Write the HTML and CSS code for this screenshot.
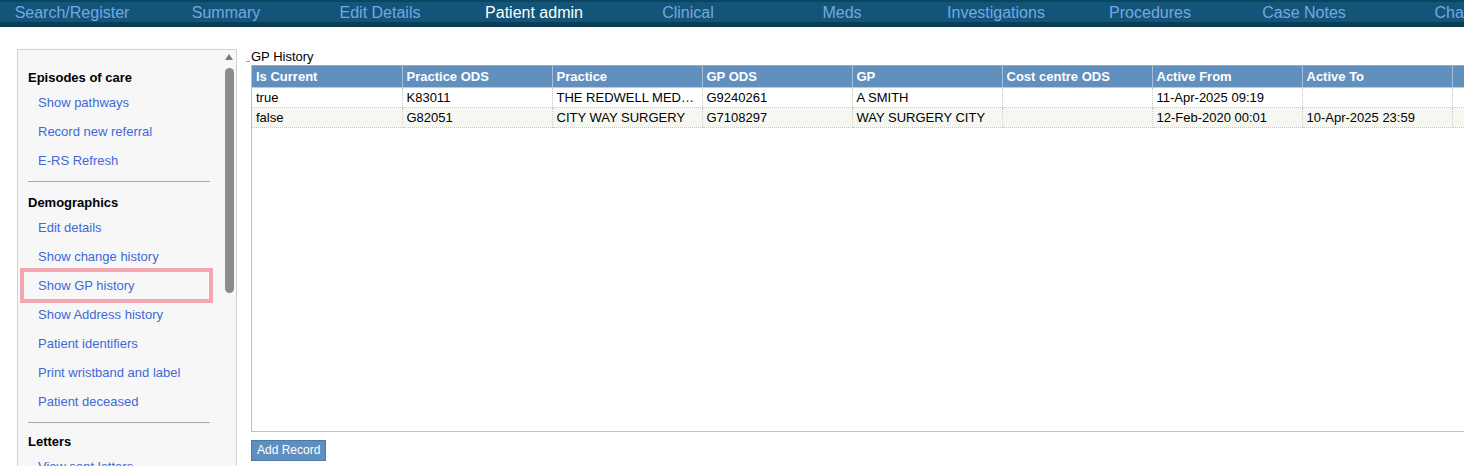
FILE: index.html
```html
<!DOCTYPE html>
<html lang="en">
<head>
    <meta charset="UTF-8">
    <meta name="viewport" content="width=device-width, initial-scale=1.0">
    <title>Patient admin - GP History</title>
    <link rel="stylesheet" href="styles.css">
</head>
<body>

    <div class="topnav">
        <div class="nav-inner">
            <a class="nav-item">Search/Register</a>
            <a class="nav-item">Summary</a>
            <a class="nav-item">Edit Details</a>
            <a class="nav-item active">Patient admin</a>
            <a class="nav-item">Clinical</a>
            <a class="nav-item">Meds</a>
            <a class="nav-item">Investigations</a>
            <a class="nav-item">Procedures</a>
            <a class="nav-item">Case Notes</a>
            <a class="nav-item">Charts</a>
        </div>
    </div>

    <div class="page">
        <aside class="sidebar">
            <div class="side-menu">
                <div class="side-heading">Episodes of care</div>
                <a class="side-link">Show pathways</a>
                <a class="side-link">Record new referral</a>
                <a class="side-link">E-RS Refresh</a>
                <div class="side-sep"></div>

                <div class="side-heading">Demographics</div>
                <a class="side-link">Edit details</a>
                <a class="side-link">Show change history</a>
                <a class="side-link highlight">Show GP history</a>
                <a class="side-link">Show Address history</a>
                <a class="side-link">Patient identifiers</a>
                <a class="side-link">Print wristband and label</a>
                <a class="side-link">Patient deceased</a>
                <div class="side-sep short"></div>

                <div class="side-heading">Letters</div>
                <a class="side-link">View sent letters</a>
                <a class="side-link">Create letter</a>
            </div>
            <div class="side-scroll">
                <span class="scroll-arrow"></span>
                <span class="scroll-thumb"></span>
            </div>
        </aside>

        <main class="content">
            <div class="panel-title">GP History</div>
            <div class="grid-box">
                <table class="grid">
                    <colgroup>
                        <col class="c150"><col class="c150"><col class="c150"><col class="c150">
                        <col class="c150"><col class="c150"><col class="c150"><col class="c150">
                        <col>
                    </colgroup>
                    <thead>
                        <tr>
                            <th>Is Current</th>
                            <th>Practice ODS</th>
                            <th>Practice</th>
                            <th>GP ODS</th>
                            <th>GP</th>
                            <th>Cost centre ODS</th>
                            <th>Active From</th>
                            <th>Active To</th>
                            <th class="filler"></th>
                        </tr>
                    </thead>
                    <tbody>
                        <tr>
                            <td>true</td>
                            <td>K83011</td>
                            <td>THE REDWELL MEDICAL CENTRE</td>
                            <td>G9240261</td>
                            <td>A SMITH</td>
                            <td></td>
                            <td>11-Apr-2025 09:19</td>
                            <td></td>
                            <td class="filler"></td>
                        </tr>
                        <tr class="alt">
                            <td>false</td>
                            <td>G82051</td>
                            <td>CITY WAY SURGERY</td>
                            <td>G7108297</td>
                            <td>WAY SURGERY CITY</td>
                            <td></td>
                            <td>12-Feb-2020 00:01</td>
                            <td>10-Apr-2025 23:59</td>
                            <td class="filler"></td>
                        </tr>
                    </tbody>
                </table>
            </div>
            <button class="add-button">Add Record</button>
        </main>
    </div>

</body>
</html>
```

FILE: styles.css
```css
body {
    margin: 0;
    height: 466px;
    overflow: hidden;
    background-color: #ffffff;
    font-family: "Liberation Sans", Arial, sans-serif;
    color: #000000;
}
.topnav {
    height: 20px;
    background-color: #135579;
    border-top: 2px solid #0c4560;
    border-bottom: 5px solid #0b3e55;
    overflow: hidden;
}
.nav-inner {
    display: flex;
    margin-left: -5px;
    padding-top: 1px;
    white-space: nowrap;
}
.nav-item {
    flex: 0 0 154px;
    text-align: center;
    font-size: 16px;
    line-height: 19px;
    color: #74a8e2;
    text-decoration: none;
}
.nav-item.active {
    color: #ffffff;
}
.page {
    display: flex;
    align-items: flex-start;
    padding: 22px 0 0 17px;
}
.sidebar {
    display: flex;
    width: 220px;
    height: 440px;
    box-sizing: border-box;
    background-color: #f7f7f7;
    border: 1px solid #d3d3d3;
    flex-shrink: 0;
}
.side-menu {
    width: 205px;
    padding: 17px 0 0 10px;
    box-sizing: border-box;
    font-size: 13px;
}
.side-heading {
    font-weight: bold;
    line-height: 21px;
}
.side-link {
    position: relative;
    display: block;
    width: 172px;
    padding-left: 10px;
    line-height: 29px;
    color: #4069d6;
    text-decoration: none;
    white-space: nowrap;
}
.side-link.highlight::after {
    content: "";
    position: absolute;
    left: -8px;
    right: -3px;
    top: -3px;
    bottom: -3px;
    border: 4px solid #f4a6b0;
}
.side-sep {
    width: 182px;
    height: 1px;
    margin: 6px 0 10px 0;
    background-color: #a8a8a8;
}
.side-sep.short {
    margin-bottom: 8px;
}
.side-scroll {
    width: 12px;
    display: flex;
    flex-direction: column;
    align-items: center;
}
.scroll-arrow {
    width: 0;
    height: 0;
    margin-top: 4px;
    border-left: 4px solid transparent;
    border-right: 4px solid transparent;
    border-bottom: 6px solid #7a7a7a;
}
.scroll-thumb {
    width: 9px;
    height: 225px;
    margin-top: 8px;
    border-radius: 5px;
    background-color: #8b8b8b;
}
.content {
    margin-left: 14px;
    flex-shrink: 0;
}
.panel-title {
    position: relative;
    font-size: 13px;
    line-height: 16px;
}
.panel-title::before {
    content: "";
    position: absolute;
    left: -5px;
    bottom: 3px;
    width: 4px;
    height: 1px;
    background-color: #ee7f86;
}
.grid-box {
    width: 1240px;
    height: 367px;
    box-sizing: border-box;
    border: 1px solid #c0c0c0;
    border-top-color: #a9a9a9;
}
.grid {
    width: 100%;
    border-collapse: collapse;
    table-layout: fixed;
    font-size: 13px;
}
.c150 {
    width: 150px;
}
.grid th {
    height: 21px;
    padding: 0 5px 0 4px;
    background-color: #6190be;
    color: #ffffff;
    font-weight: bold;
    text-align: left;
    border-right: 1px solid #a7bed8;
    border-bottom: 1px solid #c8c8c8;
    white-space: nowrap;
    overflow: hidden;
}
.grid td {
    height: 19px;
    padding: 0 5px 0 4px;
    border-right: 1px dotted #c6c6c6;
    border-bottom: 1px dotted #c6c6c6;
    white-space: nowrap;
    overflow: hidden;
    text-overflow: ellipsis;
}
.grid .filler {
    border-right: none;
}
.grid tr.alt td {
    background-color: #f7f7f2;
}
.add-button {
    margin-top: 8px;
    height: 21px;
    padding: 0 5px 1px;
    background-color: #5f8fbf;
    border: 1px solid #4c7aa9;
    color: #ffffff;
    font-family: "Liberation Sans", Arial, sans-serif;
    font-size: 12px;
    line-height: 17px;
    cursor: pointer;
}
```
